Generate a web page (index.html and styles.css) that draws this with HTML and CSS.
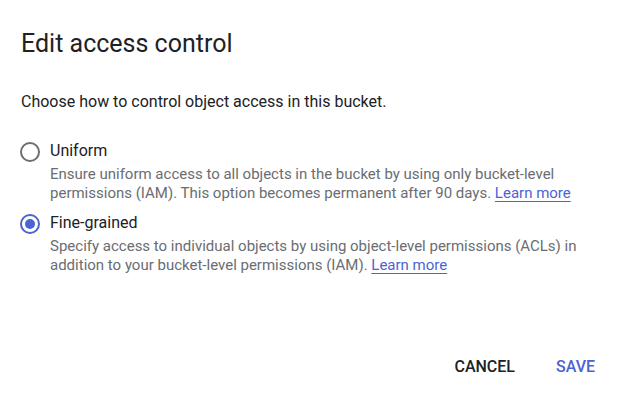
FILE: index.html
```html
<!DOCTYPE html>
<html>
<head>
<meta charset="utf-8">
<link rel="stylesheet" href="styles.css">
</head>
<body>
<div class="dialog">
  <h1 class="title">Edit access control</h1>
  <p class="intro">Choose how to control object access in this bucket.</p>
  <div class="options">
    <label class="option">
      <span class="radio"></span>
      <span class="option-text">
        <span class="option-label">Uniform</span>
        <span class="option-desc">Ensure uniform access to all objects in the bucket by using only bucket-level permissions (IAM). This option becomes permanent after 90 days. <a class="link" href="#">Learn more</a></span>
      </span>
    </label>
    <label class="option">
      <span class="radio checked"></span>
      <span class="option-text">
        <span class="option-label">Fine-grained</span>
        <span class="option-desc">Specify access to individual objects by using object-level permissions (ACLs) in addition to your bucket-level permissions (IAM). <a class="link" href="#">Learn more</a></span>
      </span>
    </label>
  </div>
  <div class="actions">
    <button class="btn cancel">CANCEL</button>
    <button class="btn save">SAVE</button>
  </div>
</div>
</body>
</html>
```
FILE: styles.css
```css
html, body {
  margin: 0;
  padding: 0;
  background: #fff;
}
body {
  font-family: Roboto, "Noto Sans", sans-serif;
  color: #202124;
}
.dialog {
  width: 628px;
  height: 408px;
  box-sizing: border-box;
  padding: 28px 25px 0 21px;
  display: flex;
  flex-direction: column;
}
.title {
  margin: 0;
  font-size: 25px;
  font-weight: 400;
  line-height: 32px;
  color: #202124;
}
.intro {
  margin: 32px 0 0 0;
  font-size: 16px;
  line-height: 20px;
  color: #202124;
}
.options {
  margin-top: 29px;
  display: flex;
  flex-direction: column;
  gap: 10px;
}
.option {
  display: flex;
  align-items: flex-start;
  gap: 10px;
}
.radio {
  width: 16px;
  height: 16px;
  border: 2px solid #6b6e72;
  border-radius: 50%;
  box-sizing: content-box;
  margin-top: 1px;
  margin-left: -1px;
  flex: none;
  position: relative;
}
.radio.checked {
  border-color: #4c63d2;
}
.radio.checked::after {
  content: "";
  position: absolute;
  left: 3px;
  top: 3px;
  width: 10px;
  height: 10px;
  border-radius: 50%;
  background: #4c63d2;
}
.option-text {
  display: flex;
  flex-direction: column;
}
.option-label {
  font-size: 16px;
  line-height: 20px;
  color: #202124;
}
.option-desc {
  font-size: 15px;
  line-height: 19px;
  color: #6a6d71;
  margin-top: 4px;
}
.link {
  color: #4c63d2;
  text-decoration: underline;
  text-decoration-thickness: 1px;
  text-underline-offset: 3px;
}
.actions {
  margin-top: auto;
  margin-bottom: 23px;
  display: flex;
  justify-content: flex-end;
  gap: 25px;
}
.btn {
  background: none;
  border: none;
  font-family: Roboto, sans-serif;
  font-size: 16px;
  font-weight: 500;
  line-height: 20px;
  padding: 8px 8px;
}
.cancel {
  color: #202124;
}
.save {
  color: #4c63d2;
}
```
